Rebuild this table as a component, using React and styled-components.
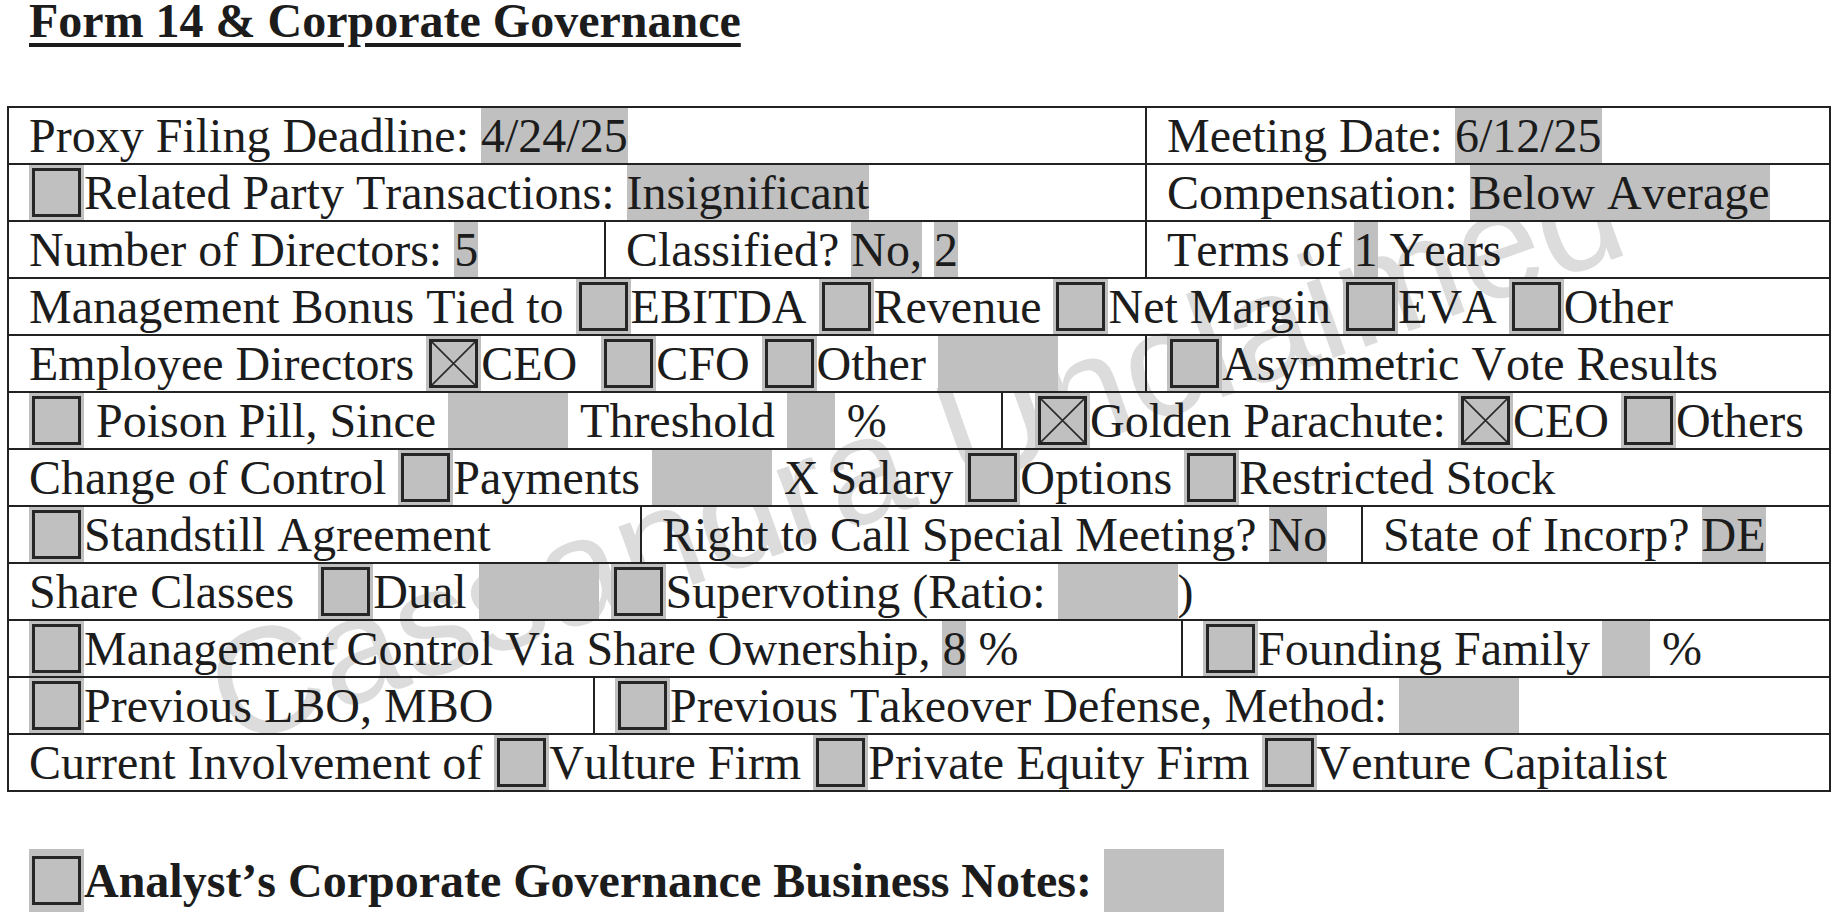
import React from 'react';
import styled, { createGlobalStyle } from 'styled-components';

const GlobalStyle = createGlobalStyle`
  html, body {
    margin: 0;
    padding: 0;
    background: #ffffff;
  }
  body {
    font-family: "Liberation Serif", "Times New Roman", serif;
    color: #1c1c1c;
    font-kerning: none;
    font-variant-ligatures: none;
  }
`;

const Page = styled.div`
  position: relative;
  width: 1840px;
  height: 920px;
  overflow: hidden;
  padding: 1px 0 0 7px;
  box-sizing: border-box;
`;

const Title = styled.h1`
  position: relative;
  z-index: 1;
  margin: 0 0 0 22px;
  font-size: 48px;
  font-weight: bold;
  line-height: 40px;
  text-decoration: underline;
  text-decoration-thickness: 4px;
  text-underline-offset: 6px;
`;

const Watermark = styled.div`
  position: absolute;
  left: 232px;
  top: 620px;
  z-index: 0;
  transform-origin: 0 128px;
  transform: rotate(-19.5deg);
  font-family: "Liberation Sans", Arial, sans-serif;
  font-size: 151px;
  line-height: 1;
  color: #dcdcdc;
  white-space: nowrap;
  pointer-events: none;
`;

const Table = styled.div`
  position: relative;
  z-index: 1;
  margin-top: 65px;
  width: 1824px;
  border: 2px solid #222;
  box-sizing: border-box;
`;

const Row = styled.div`
  display: flex;
  height: 55px;

  & + & {
    border-top: 2px solid #222;
  }
`;

const Cell = styled.div`
  flex: ${p => (p.$w ? `0 0 ${p.$w}px` : '1 1 auto')};
  box-sizing: border-box;
  padding-left: 20px;
  font-size: 48px;
  line-height: 55px;
  white-space: pre;
  overflow: hidden;

  & + & {
    border-left: 2px solid #222;
  }
`;

const Fill = styled.span`
  display: inline-block;
  background: #c0c0c0;
`;

const Blank = styled.span`
  display: inline-block;
  vertical-align: top;
  width: ${p => p.$w}px;
  height: ${p => p.$h || 55}px;
  background: #c0c0c0;
`;

const CheckField = styled.span`
  display: inline-flex;
  vertical-align: top;
  align-items: center;
  justify-content: center;
  width: 55px;
  height: ${p => p.$h || 55}px;
  background: #c0c0c0;
`;

const CheckSquare = styled.span`
  display: block;
  width: 49px;
  height: 49px;
  box-sizing: border-box;
  border: 3px solid #262626;

  svg {
    display: block;
  }
`;

const Check = ({ checked, h }) => (
  <CheckField $h={h}>
    <CheckSquare>
      {checked && (
        <svg width="43" height="43" viewBox="0 0 43 43">
          <path d="M0 0L43 43M43 0L0 43" stroke="#2a2a2a" strokeWidth="1.6" />
        </svg>
      )}
    </CheckSquare>
  </CheckField>
);

const Notes = styled.div`
  position: relative;
  z-index: 1;
  margin-top: 57px;
  padding-left: 22px;
  font-size: 48px;
  font-weight: bold;
  line-height: 63px;
  white-space: pre;
`;

export default function App() {
  return (
    <Page>
      <GlobalStyle />
      <Watermark>Cassandra Unclaimed</Watermark>
      <Title>Form 14 &amp; Corporate Governance</Title>

      <Table>
        <Row>
          <Cell $w={1136}>
            {'Proxy Filing Deadline: '}
            <Fill>4/24/25</Fill>
          </Cell>
          <Cell>
            {'Meeting Date: '}
            <Fill>6/12/25</Fill>
          </Cell>
        </Row>

        <Row>
          <Cell $w={1136}>
            <Check />
            {'Related Party Transactions: '}
            <Fill>Insignificant</Fill>
          </Cell>
          <Cell>
            {'Compensation: '}
            <Fill>Below Average</Fill>
          </Cell>
        </Row>

        <Row>
          <Cell $w={595}>
            {'Number of Directors: '}
            <Fill>5</Fill>
          </Cell>
          <Cell $w={541}>
            {'Classified? '}
            <Fill>No,</Fill>
            {' '}
            <Fill>2</Fill>
          </Cell>
          <Cell>
            {'Terms of '}
            <Fill>1</Fill>
            {' Years'}
          </Cell>
        </Row>

        <Row>
          <Cell>
            {'Management Bonus Tied to '}
            <Check />
            {'EBITDA '}
            <Check />
            {'Revenue '}
            <Check />
            {'Net Margin '}
            <Check />
            {'EVA '}
            <Check />
            {'Other'}
          </Cell>
        </Row>

        <Row>
          <Cell $w={1136}>
            {'Employee Directors '}
            <Check checked />
            {'CEO  '}
            <Check />
            {'CFO '}
            <Check />
            {'Other '}
            <Blank $w={120} />
          </Cell>
          <Cell>
            <Check />
            {'Asymmetric Vote Results'}
          </Cell>
        </Row>

        <Row>
          <Cell $w={992}>
            <Check />
            {' Poison Pill, Since '}
            <Blank $w={120} />
            {' Threshold '}
            <Blank $w={48} />
            {' %'}
          </Cell>
          <Cell>
            {' '}
            <Check checked />
            {'Golden Parachute: '}
            <Check checked />
            {'CEO '}
            <Check />
            {'Others'}
          </Cell>
        </Row>

        <Row>
          <Cell>
            {'Change of Control '}
            <Check />
            {'Payments '}
            <Blank $w={120} />
            {' X Salary '}
            <Check />
            {'Options '}
            <Check />
            {'Restricted Stock'}
          </Cell>
        </Row>

        <Row>
          <Cell $w={631}>
            <Check />
            {'Standstill Agreement'}
          </Cell>
          <Cell $w={721}>
            {'Right to Call Special Meeting? '}
            <Fill>No</Fill>
          </Cell>
          <Cell>
            {'State of Incorp? '}
            <Fill>DE</Fill>
          </Cell>
        </Row>

        <Row>
          <Cell>
            {'Share Classes  '}
            <Check />
            {'Dual '}
            <Blank $w={120} />
            {' '}
            <Check />
            {'Supervoting (Ratio: '}
            <Blank $w={120} />
            {')'}
          </Cell>
        </Row>

        <Row>
          <Cell $w={1172}>
            <Check />
            {'Management Control Via Share Ownership, '}
            <Fill>8</Fill>
            {' %'}
          </Cell>
          <Cell>
            <Check />
            {'Founding Family '}
            <Blank $w={48} />
            {' %'}
          </Cell>
        </Row>

        <Row>
          <Cell $w={584}>
            <Check />
            {'Previous LBO, MBO'}
          </Cell>
          <Cell>
            <Check />
            {'Previous Takeover Defense, Method: '}
            <Blank $w={120} />
          </Cell>
        </Row>

        <Row>
          <Cell>
            {'Current Involvement of '}
            <Check />
            {'Vulture Firm '}
            <Check />
            {'Private Equity Firm '}
            <Check />
            {'Venture Capitalist'}
          </Cell>
        </Row>
      </Table>

      <Notes>
        <Check h={63} />
        {'Analyst’s Corporate Governance Business Notes: '}
        <Blank $w={120} $h={63} />
      </Notes>
    </Page>
  );
}
